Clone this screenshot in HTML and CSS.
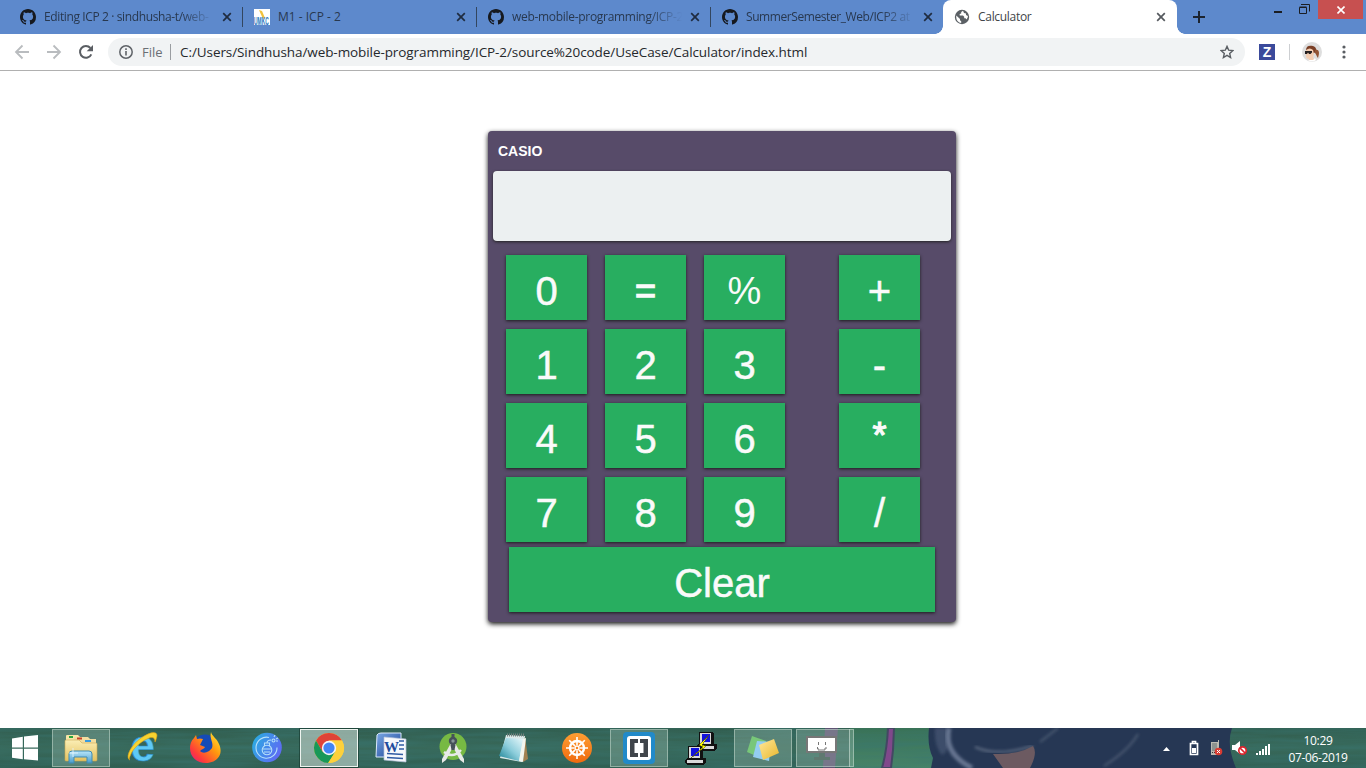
FILE: index.html
```html
<!DOCTYPE html>
<html lang="en">
<head>
<meta charset="utf-8">
<title>Calculator</title>
<link rel="stylesheet" href="styles.css">
</head>
<body>
<svg class="defs" width="0" height="0">
  <defs>
    <symbol id="github" viewBox="0 0 16 16"><path d="M8 0C3.58 0 0 3.58 0 8c0 3.54 2.29 6.53 5.47 7.59.4.07.55-.17.55-.38 0-.19-.01-.82-.01-1.49-2.01.37-2.53-.49-2.69-.94-.09-.23-.48-.94-.82-1.13-.28-.15-.68-.52-.01-.53.63-.01 1.08.58 1.23.82.72 1.21 1.87.87 2.33.66.07-.52.28-.87.51-1.07-1.78-.2-3.64-.89-3.64-3.95 0-.87.31-1.59.82-2.15-.08-.2-.36-1.02.08-2.12 0 0 .67-.21 2.2.82.64-.18 1.32-.27 2-.27.68 0 1.36.09 2 .27 1.53-1.04 2.2-.82 2.2-.82.44 1.1.16 1.92.08 2.12.51.56.82 1.27.82 2.15 0 3.07-1.87 3.75-3.65 3.95.29.25.54.73.54 1.48 0 1.07-.01 1.93-.01 2.2 0 .21.15.46.55.38A8.013 8.013 0 0016 8c0-4.42-3.58-8-8-8z" fill="#16191f"/></symbol>
    <symbol id="close" viewBox="0 0 10 10"><path d="M1.2 1.2 8.8 8.8M8.8 1.2 1.2 8.8" stroke="currentColor" stroke-width="1.7"/></symbol>
    <linearGradient id="folder" x2="0" y2="1"><stop offset="0" stop-color="#fbeeb5"/><stop offset="1" stop-color="#e3c15f"/></linearGradient>
    <linearGradient id="tray" x2="0" y2="1"><stop offset="0" stop-color="#b8e6fa"/><stop offset="1" stop-color="#4a9bcb"/></linearGradient>
    <linearGradient id="bomb" x2="1" y2="0.5"><stop offset="0" stop-color="#25b3df"/><stop offset="1" stop-color="#5d6cf3"/></linearGradient>
    <linearGradient id="fox" x1="1" x2="0" y2="1"><stop offset="0" stop-color="#fff23c"/><stop offset=".4" stop-color="#ff980e"/><stop offset=".75" stop-color="#ff3b3b"/><stop offset="1" stop-color="#e01785"/></linearGradient>
    <linearGradient id="word" x2="1" y2="1"><stop offset="0" stop-color="#7ba9e6"/><stop offset="1" stop-color="#173f92"/></linearGradient>
    <linearGradient id="pad" x1="1" x2="0" y2="1"><stop offset="0" stop-color="#e8f8fb"/><stop offset=".5" stop-color="#8ccddb"/><stop offset="1" stop-color="#177f92"/></linearGradient>
    <linearGradient id="helm" x2="0" y2="1"><stop offset="0" stop-color="#ff9e33"/><stop offset="1" stop-color="#ef6a0e"/></linearGradient>
    <linearGradient id="note" x2="1" y2="1"><stop offset="0" stop-color="#ffe89a"/><stop offset="1" stop-color="#e9b72c"/></linearGradient>
    <linearGradient id="sea" x2="0" y2="1"><stop offset="0" stop-color="#315d4e"/><stop offset=".5" stop-color="#38695a"/><stop offset="1" stop-color="#305f52"/></linearGradient>
    <linearGradient id="sea2" x2="0" y2="1"><stop offset="0" stop-color="#397257"/><stop offset="1" stop-color="#478468"/></linearGradient>
    <filter id="grain" x="0" y="0" width="1" height="1"><feTurbulence type="fractalNoise" baseFrequency=".012 .22" numOctaves="3" seed="4"/><feColorMatrix values="0 0 0 0 .04  0 0 0 0 .18  0 0 0 0 .17  .9 0 0 0 -.25"/></filter>
    <filter id="soft"><feGaussianBlur stdDeviation="1.5"/></filter>
  </defs>
</svg>

<div class="tabstrip">
  <div class="tab"><svg class="fav"><use href="#github"/></svg><span class="tab-title fade t1">Editing ICP 2 · sindhusha-t/web-</span><svg class="x"><use href="#close"/></svg></div>
  <div class="tab"><svg class="fav" viewBox="0 0 16 16"><path fill="#fff" d="M0 0h16v16H0z"/><path fill="#f2c23b" d="m5 1 3 1 3 7-2 1z"/><text x="0" y="9" class="umkc" transform="scale(.82 1.75)">UMKC</text></svg><span class="tab-title">M1 - ICP - 2</span><svg class="x"><use href="#close"/></svg></div>
  <div class="tab"><svg class="fav"><use href="#github"/></svg><span class="tab-title fade t3">web-mobile-programming/ICP-2</span><svg class="x"><use href="#close"/></svg></div>
  <div class="tab last"><svg class="fav"><use href="#github"/></svg><span class="tab-title fade t4">SummerSemester_Web/ICP2 at</span><svg class="x"><use href="#close"/></svg></div>
  <div class="tab active"><svg class="fav" viewBox="0 0 16 16"><circle cx="8" cy="8" r="7.2" fill="#5b6065"/><path fill="#fff" d="M9 1.8 7.2 3.1v1.5L5.7 5v1.4H9l1.2 1.3v1.5h1.4l1 1.2c.8-1 1.3-2.2 1.3-3.4L12 6V4.6L10 4zM2.3 6.5 6 10v1.2l1.2 1v1.7C4 13.5 1.8 11 2.3 6.5z"/></svg><span class="tab-title">Calculator</span><svg class="x"><use href="#close"/></svg></div>
  <svg class="plus" viewBox="0 0 12 12"><path d="M6 0v12M0 6h12" stroke="#1c2430" stroke-width="2"/></svg>
  <div class="window-controls">
    <svg class="min" viewBox="0 0 8 2"><path d="M0 0h8v2H0z" fill="#1a1d22"/></svg>
    <svg class="restore" viewBox="0 0 11 11"><path d="M.5 3.5h7v6h-7zM.5 3h7M2 .5h8.500v7" fill="none" stroke="#1a1d22"/></svg>
    <div class="win-close"><svg viewBox="0 0 8 8"><path d="m.5.5 7 7m0-7-7 7" stroke="#fff" stroke-width="1.6"/></svg></div>
  </div>
</div>

<div class="toolbar">
  <svg class="nav" viewBox="0 0 16 16"><path d="M15 8H2m6.500-6.500L2 8l6.500 6.500" fill="none" stroke="#b9bcbf" stroke-width="1.8"/></svg>
  <svg class="nav" viewBox="0 0 16 16"><path d="M1 8h13M7.500 1.500 14 8l-6.500 6.500" fill="none" stroke="#b9bcbf" stroke-width="1.8"/></svg>
  <svg class="nav" viewBox="0 0 16 16"><path d="M13.300 10.300A5.900 5.900 0 1 1 12.400 4" fill="none" stroke="#5a5e63" stroke-width="2"/><path d="M15 1v6.300H8.700z" fill="#5a5e63"/></svg>
  <div class="omnibox">
    <svg class="info" viewBox="0 0 14 14"><circle cx="7" cy="7" r="6.200" fill="none" stroke="#5f6368" stroke-width="1.5"/><path d="M6.200 6h1.600v4.500H6.200zM6.200 3.300h1.600v1.600H6.200z" fill="#5f6368"/></svg>
    <span class="scheme">File</span><i class="bar"></i><span class="url">C:/Users/Sindhusha/web-mobile-programming/ICP-2/source%20code/UseCase/Calculator/index.html</span>
    <svg class="star" viewBox="0 0 14 14"><path d="m7 1.400 1.700 3.800 4.100.4-3.100 2.800.9 4.100L7 10.400l-3.600 2.100.9-4.100-3.100-2.800 4.100-.4z" fill="none" stroke="#5a5e63" stroke-width="1.400"/></svg>
  </div>
  <span class="zotero">Z</span>
  <i class="divider"></i>
  <svg class="avatar" viewBox="0 0 20 20"><circle cx="10" cy="10" r="10" fill="#dedede"/><path d="M4 8c0-4 3-5 7-4 3 1 4 4 3 6l-4 2z" fill="#7a3f26"/><path d="M13 8c4-1 5 2 3 8-1-1-2-4-3-5z" fill="#925333"/><path d="M4 8q4-3 7 0l1 4-1 3 2 4H7v-2q-3 0-3-3z" fill="#f3ceb3"/><path d="M3 9h7v1.500L8.500 12H7l-1-1.500L5 12H3z" fill="#252020"/><path d="M6 18q4 3 8 0l-1-2-2 2z" fill="#fff"/></svg>
  <svg class="menu" viewBox="0 0 4 14"><g fill="#5a5e63"><circle cx="2" cy="2" r="1.600"/><circle cx="2" cy="7" r="1.600"/><circle cx="2" cy="12" r="1.600"/></g></svg>
</div>

<main class="page">
  <section class="calculator">
    <h1 class="brand">CASIO</h1>
    <div class="display"></div>
    <div class="keys">
      <button class="key">0</button><button class="key equals">=</button><button class="key percent">%</button><button class="key op">+</button>
      <button class="key">1</button><button class="key">2</button><button class="key">3</button><button class="key op">-</button>
      <button class="key">4</button><button class="key">5</button><button class="key">6</button><button class="key op times">*</button>
      <button class="key">7</button><button class="key">8</button><button class="key">9</button><button class="key op">/</button>
    </div>
    <button class="key clear">Clear</button>
  </section>
</main>

<footer class="taskbar">
  <svg class="wallpaper" viewBox="0 0 1366 40">
    <path fill="url(#sea)" d="M0 0h1366v40H0z"/>
    <path fill="url(#sea2)" d="M850 0h90v40h-90z"/>
    <path filter="url(#grain)" d="M0 0h1366v40H0z"/>
    <path d="M825 0h13l-3 40h-12z" fill="#665078" opacity=".85"/>
    <path d="M888 0h6l-1 22-2 18h-9q5-18 6-40z" fill="#80488b" stroke="#434863" stroke-width="2"/>
    <path d="M929 0h303q-6 17 4 40H931l2-10q-6-12-4-30z" fill="#263754"/>
    <path d="M935 0q-1 18 7 27 10-5 5-27z" fill="#3e4e6b" filter="url(#soft)"/>
    <path d="M949 0q-6 25 23 40" fill="none" stroke="#667590" stroke-width="5" filter="url(#soft)"/>
    <path d="M975 19q22 10 58-1" fill="none" stroke="#5e6c83" stroke-width="2" filter="url(#soft)"/>
    <path d="M993 26q25 1 40-8 5 7-3 22h-27z" fill="#6c5a61"/>
    <path d="m1040 14 18-14M1104 38q25-16 34-32" fill="none" stroke="#4b5a72" stroke-width="2" filter="url(#soft)"/>
  </svg>
  <svg class="start" viewBox="0 0 26 26"><path fill="#fff" d="m0 3.500 10.800-1.700V12.500H0zM12 1.600 26 0v12.500H12zM0 13.700h10.800v10.600L0 22.800zM12 13.700h14V25.500l-14-1.200z"/></svg>

  <div class="app open"><svg viewBox="0 0 58 40"><path d="M14 10V8q0-1 1-1h11l2 2v4H14z" fill="#f5e5a7"/><path d="M22 13V9h14l2 2h6v5H22z" fill="#f2dda0"/><path fill="#28a63b" d="M17 8h4v2h-4z"/><path fill="#c64028" d="M25 9.500h5v2h-5z"/><path fill="#389bdf" d="M33 12h6v2h-6z"/><path d="M13 13q0-1 1-1h13l3 3h14q1 0 1 1v16q0 1-1 1H14q-1 0-1-1z" fill="url(#folder)" stroke="#cda951" stroke-width=".6"/><path d="M17 35V26q0-3 3-3h17q3 0 3 3v9h-5v-6H22v6z" fill="url(#tray)" stroke="#3f8bb3"/><path d="M21 20v9m-4-4h9" stroke="#e8f8ff" stroke-width=".8"/></svg></div>
  <div class="app"><svg viewBox="0 0 58 40"><text x="16.500" y="32.500" class="ie">e</text><path d="M16 32c-5-2 0-14 11-22C36 4 42 3 43 7c0 2-1 5-2 7 0-4-2-6-8-3-7 3-14 10-16 15-2 4-2 6-1 6z" fill="#f8d330" stroke="#d99d16" stroke-width=".6"/></svg></div>
  <div class="app"><svg viewBox="0 0 58 40"><circle cx="29" cy="18" r="11.500" fill="#164bb6"/><path d="M35 4c1 4 5 6 7 10 7 12-1 21-12 21-9 0-16-6-16-15 0-4 1-7 4-10l2-3 1 4q3-1 6 0l-3 6 5 2c-1 2-3 2-5 4 4 4 10 0 12-3 2-6-3-9-1-16z" fill="url(#fox)"/></svg></div>
  <div class="app"><svg viewBox="0 0 58 40"><circle cx="29" cy="19.500" r="14.800" fill="url(#bomb)"/><g fill="none" stroke="#b5e0fa" stroke-width="1.100"><path d="M31 9.500a10.500 10.500 0 1 0 8 10"/><circle cx="29" cy="22" r="4.800"/><path d="M26.500 18v-3h5v3M29 15q0-3 4-3m-8 9h8m-7 3h6"/><circle cx="35.500" cy="12.500" r="1.500"/><path d="m36 9 1-2m1 6h2m-2-2 2-1"/></g></svg></div>
  <div class="app current"><svg viewBox="0 0 58 40"><circle cx="29" cy="20" r="15" fill="#fdd13c"/><path d="M16 12.500A15 15 0 0 1 42 12.500H29L22.500 24z" fill="#df4337"/><path d="M16 12.500A15 15 0 0 0 28 35l7.500-11.250H22.500z" fill="#189858"/><path d="m28.500 35 7-12q1.500-4-1-8l-5.500-2.500h13A15 15 0 0 1 28.500 35z" fill="#fdd13c"/><circle cx="29" cy="20" r="7.200" fill="#f3f5f7"/><circle cx="29" cy="20" r="5.600" fill="#4285f4"/></svg></div>
  <div class="app"><svg viewBox="0 0 58 40"><path d="M15 7q1-2 4-2h20v24H14z" fill="url(#word)" stroke="#dbe9fa"/><path d="m22 9 22 2v23l-22-2z" fill="#f6f8fc" stroke="#b4c2d8" stroke-width=".7"/><path d="M37 13h5m-5 4h5m-5 4h5M25 25.500l16 1m-16 3 16 1" stroke="#315ba3" stroke-width="1.700"/><text x="22" y="24" class="word">W</text></svg></div>
  <div class="app"><svg viewBox="0 0 58 40"><circle cx="29" cy="18.500" r="13.500" fill="#77b943"/><path d="M27 15h4l9 16v4l-4-3-7-13-7 13-4 3v-4z" fill="#e8eae7"/><path d="M20 24q9 7 17-2" fill="none" stroke="#e8eae7" stroke-width="2.500"/><circle cx="29" cy="13" r="4.200" fill="#465159"/><circle cx="29" cy="13" r="1.700" fill="#88959a"/><path d="M27.500 6h3v4h-3zm-1 11h5l-1 5h-3z" fill="#465159"/></svg></div>
  <div class="app"><svg viewBox="0 0 58 40"><path d="m39 8 3 23-5 3z" fill="#a28150"/><path d="m20 7 19 1-3 26-22-4z" fill="#dae9e8"/><path d="m20 10 17 1-4 22-20-5z" fill="url(#pad)"/><path d="m37 11-4 22 4 1 3-24z" fill="#f3f5ed"/><path d="M21 7h18" stroke="#77827f" stroke-width="3" stroke-dasharray="1 1"/></svg></div>
  <div class="app"><svg viewBox="0 0 58 40"><circle cx="29" cy="20" r="15" fill="url(#helm)"/><g fill="none" stroke="#fff"><circle cx="29" cy="20" r="7" stroke-width="2.400"/><circle cx="29" cy="20" r="2" stroke-width="1.500"/><path d="M29 9v8m0 6v8M18 20h8m6 0h8m-18.800-7.800 5.700 5.700m4.200 4.200 5.700 5.700m0-15.600-5.700 5.700m-4.200 4.200-5.700 5.700" stroke-width="1.600"/></g></svg></div>
  <div class="app open"><svg viewBox="0 0 58 40"><rect x="13" y="4" width="32" height="32" rx="4" fill="#218ac9"/><rect x="17" y="8" width="24" height="24" rx="3" fill="#fff"/><path d="M28 11h-8v18h8v-4h-3.500V15H28zM30 11h8v18h-8v-4h3.500V15H30z" fill="#40454b"/></svg></div>
  <div class="app"><svg viewBox="0 0 58 40" shape-rendering="crispEdges"><g id="pc"><path d="M27 4h13l2 2v10h3v4l-3 3H26l-2-2v-3l3-2z" fill="#111"/><path d="M28 5h11v11H28zM26 18h16v3H26z" fill="#d9d9d9"/><path d="M30 6h8v8h-8z" fill="#1212dd"/></g><use href="#pc" x="-11" y="14"/><path d="m37 7-10 10 4 2-12 11 15-12-4-1z" fill="#ff0" stroke="#5c5b00" stroke-width=".6"/></svg></div>
  <div class="app open"><svg viewBox="0 0 58 40"><path d="m18 8 14 5-3 18-16-7z" fill="#78c779"/><path d="m23 13 14 1-2 19-16-4z" fill="#94cdf1"/><path d="m25 17 15-6 5 14-16 7z" fill="url(#note)"/></svg></div>
  <div class="app open stacked"><svg viewBox="0 0 58 40"><path d="M11 9h29v15H11z" fill="#fff" stroke="#777" stroke-width="2"/><path d="M23 25h6v4h5v3H18v-3h5z" fill="#5f7970"/><path d="M22.500 14v3m7-3v3m-8 2v2h1.500m-1 1h7m-1-1h2v-2" fill="none" stroke="#777"/></svg></div>

  <div class="tray">
    <svg class="caret" viewBox="0 0 7 4"><path d="M0 4h7L3.500 0z" fill="#fff"/></svg>
    <svg class="battery" viewBox="0 0 10 16"><path d="M1.500 3.500h7v11h-7zM3.500 1.500h3v2h-3z" fill="none" stroke="#fff" stroke-width="1.700"/><path d="M3 8h4v5H3z" fill="#fff"/></svg>
    <svg class="device" viewBox="0 0 13 16"><path d="M1 2h7V0h1v15H1z" fill="#bcb9b1"/><path d="M2 3h5v8H2z" fill="#8d928f"/><path d="M2 12h1v1H2zm2 0h1v1H4z" fill="#333"/><circle cx="8.500" cy="11.500" r="3.800" fill="#d93b32"/><path d="m7 10 3 3m0-3-3 3" stroke="#fff"/></svg>
    <svg class="volume" viewBox="0 0 15 16"><path d="M0 5h3l5-4v13l-5-4H0z" fill="#fff"/><circle cx="10.500" cy="10.500" r="3.700" fill="#fff" stroke="#dc242c" stroke-width="1.700"/><path d="m8 8 5 5" stroke="#dc242c" stroke-width="1.700"/></svg>
    <svg class="signal" viewBox="0 0 15 11"><path d="M0 9h2v2H0zm3-2h2v4H3zm3-2h2v6H6zm3-3h2v9H9zm3-2h2v11h-2z" fill="#fff"/></svg>
    <div class="clock"><span>10:29</span><span>07-06-2019</span></div>
  </div>
</footer>
</body>
</html>
```

FILE: styles.css
```css
* { box-sizing: border-box; }
body {
  margin: 0;
  width: 1366px;
  height: 768px;
  overflow: hidden;
  display: flex;
  flex-direction: column;
  background: #fff;
  font-family: "Open Sans", "Noto Sans", sans-serif;
}
svg { display: block; flex: none; }
.defs { position: absolute; }

.tabstrip {
  height: 34px;
  flex: none;
  display: flex;
  padding-left: 9px;
  background: #5d89cc;
}
.tab {
  position: relative;
  width: 234px;
  height: 34px;
  flex: none;
  display: flex;
  align-items: center;
  padding: 0 11px;
  font-size: 12px;
  color: #28384f;
}
.last { width: 232px; padding-right: 10px; }
.tab:not(.active):not(.last)::after {
  content: "";
  position: absolute;
  right: 0;
  top: 7px;
  width: 1px;
  height: 20px;
  background: #33465f;
}
.fav { width: 16px; height: 16px; margin-right: 8px; }
.tab-title {
  flex: 1;
  white-space: nowrap;
  overflow: hidden;
  line-height: 20px;
  margin-right: 8px;
}
.t1 { letter-spacing: -.38px; }
.t3 { letter-spacing: -.3px; }
.t4 { letter-spacing: -.42px; }
.active .tab-title { letter-spacing: -.3px; }
.fade { -webkit-mask-image: linear-gradient(90deg, #000 80%, transparent); mask-image: linear-gradient(90deg, #000 80%, transparent); }
.x { width: 10px; height: 10px; color: #1f2c40; }
.active .x { color: #55595e; }
.umkc { font: bold 6px "Liberation Sans", sans-serif; fill: #2a75c0; }
.active { background: #fff; border-radius: 8px 8px 0 0; color: #414549; }
.active::before, .active::after {
  content: "";
  position: absolute;
  bottom: 0;
  width: 8px;
  height: 8px;
}
.active::before { left: -8px; background: radial-gradient(circle at 0 0, transparent 7.5px, #fff 8px); }
.active::after { right: -8px; background: radial-gradient(circle at 100% 0, transparent 7.5px, #fff 8px); }
.plus { width: 12px; height: 12px; margin: 11px 0 0 16px; }
.window-controls { display: flex; margin-left: auto; padding-right: 3px; }
.min { width: 8px; height: 2px; margin: 11px 17px 0 0; }
.restore { width: 11px; height: 11px; margin: 4px 8px 0 0; }
.win-close {
  width: 45px;
  height: 19px;
  display: flex;
  align-items: center;
  justify-content: center;
  background: #c75050;
}
.win-close svg { width: 8px; height: 8px; }

.toolbar {
  height: 37px;
  flex: none;
  display: flex;
  align-items: center;
  padding-left: 14px;
  border-bottom: 1px solid #b0b0b0;
  background: #fff;
}
.nav { width: 16px; height: 16px; margin-right: 16px; }
.nav + .nav + .nav { margin-right: 14px; }
.omnibox {
  width: 1137px;
  height: 28px;
  display: flex;
  align-items: center;
  padding: 0 11px;
  border-radius: 14px;
  background: #f1f3f4;
  font-size: 13.5px;
}
.info { width: 14px; height: 14px; margin-right: 9px; }
.scheme { width: 28px; color: #6b6f74; font-size: 13px; }
.bar { width: 1px; height: 16px; background: #9a9da1; margin-right: 9px; }
.url { color: #25282c; white-space: nowrap; letter-spacing: -.08px; }
.star { width: 14px; height: 14px; margin-left: auto; }
.zotero {
  width: 16px;
  height: 16px;
  margin-left: 14px;
  background: #3b4a9b;
  color: #fff;
  font: bold 14px/16px "Liberation Sans", sans-serif;
  text-align: center;
}
.divider { width: 1px; height: 16px; margin: 0 12px 0 14px; background: #cdcfd2; }
.avatar { width: 20px; height: 20px; }
.menu { width: 4px; height: 14px; margin-left: 20px; }

.page { flex: 1; padding-top: 60px; }
.calculator {
  width: 468px;
  height: 491px;
  margin-left: 488px;
  padding: 0 5px;
  border-radius: 4px;
  background: #574b69;
  box-shadow: 0 2px 5px #111;
}
.brand {
  margin: 0;
  height: 40px;
  padding-left: 5px;
  color: #fff;
  font: bold 14px/40px "Liberation Sans", Arial, sans-serif;
}
.display {
  height: 70px;
  border-radius: 4px;
  background: #ecf0f1;
  box-shadow: 0 1px 3px #222;
}
.keys {
  display: grid;
  grid-template-columns: 81px 81px 81px 81px;
  column-gap: 18px;
  row-gap: 9px;
  padding: 14px 0 5px 13px;
}
.key {
  height: 65px;
  padding: 0;
  border: 0;
  background: #28ae60;
  box-shadow: 0 1px 3px #1c1c1c;
  color: #fafafa;
  font: 40px/72px "Liberation Sans", Arial, sans-serif;
  -webkit-text-stroke: .5px #fafafa;
  display: block;
}
.op { margin-left: 36px; width: 81px; }
.equals { -webkit-text-stroke-width: 1.3px; font-size: 36px; }
.percent { font-size: 38px; -webkit-text-stroke-width: 0; }
.times { font-size: 36px; line-height: 66px; -webkit-text-stroke-width: 1.2px; }
.clear { width: 426px; margin-left: 16px; }

.taskbar {
  position: relative;
  height: 40px;
  flex: none;
  display: flex;
  align-items: center;
  overflow: hidden;
}
.wallpaper { position: absolute; left: 0; top: 0; width: 1366px; height: 40px; z-index: -1; }
.start { width: 26px; height: 26px; margin: 0 14px 0 12px; }
.app {
  position: relative;
  width: 58px;
  height: 40px;
  flex: none;
  margin-right: 4px;
  display: flex;
  align-items: center;
}
.app svg { width: 58px; height: 40px; position: relative; }
.open::before, .current::before {
  content: "";
  position: absolute;
  inset: 1px 0;
  border: 1px solid rgba(205, 225, 213, .5);
  background: rgba(190, 215, 200, .27);
}
.current::before { border-color: #edf4ef; background: rgba(215, 228, 220, .55); box-shadow: 0 0 0 1px rgba(20, 55, 45, .6); }
.stacked::after {
  content: "";
  position: absolute;
  right: 4px;
  top: 1px;
  width: 1px;
  height: 38px;
  background: rgba(205, 225, 213, .65);
}
.ie { font: bold 44px "Liberation Sans", sans-serif; fill: #5ec9f5; stroke: #2488c7; stroke-width: .6px; }
.word { font: bold 15px "Liberation Serif", serif; fill: #214b9c; }
.tray { display: flex; align-items: center; height: 40px; margin-left: auto; padding-right: 18px; }
.caret { width: 7px; height: 4px; margin: 1px 19px 0 0; }
.battery { width: 10px; height: 16px; margin: 0 11px 0 0; }
.device { width: 13px; height: 16px; margin: 0 9px 0 0; }
.volume { width: 15px; height: 16px; margin: 0 9px 0 0; }
.signal { width: 15px; height: 11px; margin: 2px 17px 0 0; }
.clock {
  width: 60px;
  display: flex;
  flex-direction: column;
  align-items: center;
  color: #fff;
  font-size: 12px;
  line-height: 17px;
  letter-spacing: -.35px;
  white-space: nowrap;
  padding-top: 1px;
}
```
